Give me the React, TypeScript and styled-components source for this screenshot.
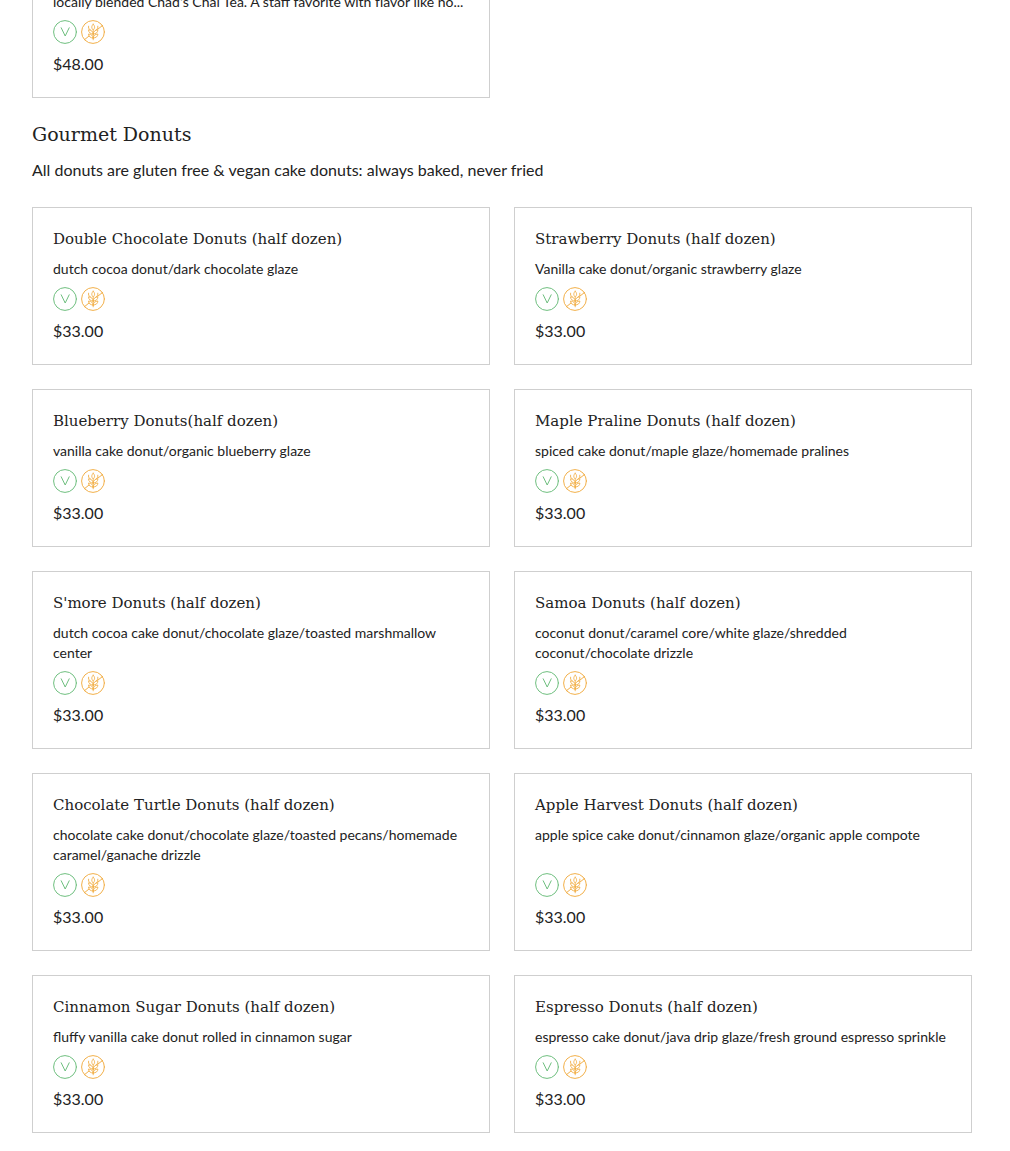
import React from 'react';
import styled, { createGlobalStyle } from 'styled-components';

const GlobalStyle = createGlobalStyle`
  *, *::before, *::after { box-sizing: border-box; }
  body {
    margin: 0;
    background: #fff;
    color: #222;
    font-family: Lato, "Open Sans", sans-serif;
    font-size: 16px;
    line-height: 24px;
  }
  h2, h3, p, ul { margin: 0; padding: 0; }
  ul { list-style: none; }
`;

const Page = styled.main`
  overflow: hidden;
  padding: 0 38px 16px 32px;
`;

const Section = styled.section`
  display: flex;
  flex-direction: column;
`;

const SectionTitle = styled.h2`
  margin-top: 20px;
  font-family: "DejaVu Serif", serif;
  font-size: 19px;
  font-weight: 400;
  line-height: 32px;
`;

const SectionText = styled.p`
  margin: 8px 0 25px;
`;

const Grid = styled.ul`
  display: grid;
  grid-template-columns: repeat(2, minmax(0, 1fr));
  gap: 24px;
`;

const Card = styled.li<{ $continued?: boolean }>`
  display: flex;
  flex-direction: column;
  gap: 8px;
  padding: ${(p) => (p.$continued ? '0 20px 21px' : '20px 20px 21px')};
  margin-top: ${(p) => (p.$continued ? '-8px' : '0')};
  border: 1px solid #cfcfcf;
  border-top-width: ${(p) => (p.$continued ? '0' : '1px')};
`;

const ItemTitle = styled.h3`
  font-family: "DejaVu Serif", serif;
  font-size: 15px;
  font-weight: 400;
  line-height: 23px;
`;

const Description = styled.p<{ $singleLine?: boolean }>`
  flex: 1;
  font-size: 14px;
  line-height: 20px;
  ${(p) => p.$singleLine && 'white-space: nowrap; overflow: hidden; text-overflow: ellipsis;'}
`;

const Badges = styled.div`
  display: flex;
  gap: 4px;
`;

const BadgeIcon = styled.svg<{ $tone: string }>`
  display: block;
  width: 24px;
  height: 24px;
  fill: none;
  stroke: ${(p) => p.$tone};
  stroke-linecap: round;
  stroke-linejoin: round;
`;

const Price = styled.p`
  line-height: 24px;
`;

const VeganBadge = () => (
  <BadgeIcon $tone="#6fbf7f" viewBox="0 0 24 24" role="img" aria-label="Vegan">
    <circle cx="12" cy="12" r="11.4" strokeWidth="1" />
    <path d="M8.2 7.800 12.200 16l4-8.200" strokeWidth="1" />
  </BadgeIcon>
);

const GlutenFreeBadge = () => (
  <BadgeIcon $tone="#f2b04a" viewBox="0 0 24 24" role="img" aria-label="Gluten free">
    <circle cx="12" cy="12" r="11.4" strokeWidth="1" />
    <path d="M3.600 19.600 8 16M16.800 9.200 21.600 5.400" strokeWidth="1" />
    <path
      d="M12.200 10v9.800M12.200 4.200c-1.900 1.900-1.900 3.900 0 5.800 1.900-1.900 1.900-3.900 0-5.800ZM12.200 14c-.1-2.600-1.900-4-4.700-4.200.1 2.700 1.900 4.200 4.700 4.200ZM12.200 14c.1-2.600 1.900-4 4.700-4.200-.1 2.700-1.900 4.200-4.700 4.200ZM12.200 18c-.1-2.400-1.900-3.800-4.700-4 .1 2.500 1.900 4 4.700 4ZM12.200 18c.1-2.400 1.900-3.800 4.700-4-.1 2.500-1.900 4-4.700 4ZM7.600 6.200v2.200l1.800 1.400M16.800 6.200v2.200L15 9.800"
      strokeWidth="0.9"
    />
  </BadgeIcon>
);

type Item = { title?: string; description: string; price: string };

const donuts: Item[] = [
  { title: 'Double Chocolate Donuts (half dozen)', description: 'dutch cocoa donut/dark chocolate glaze', price: '$33.00' },
  { title: 'Strawberry Donuts (half dozen)', description: 'Vanilla cake donut/organic strawberry glaze', price: '$33.00' },
  { title: 'Blueberry Donuts(half dozen)', description: 'vanilla cake donut/organic blueberry glaze', price: '$33.00' },
  { title: 'Maple Praline Donuts (half dozen)', description: 'spiced cake donut/maple glaze/homemade pralines', price: '$33.00' },
  { title: "S'more Donuts (half dozen)", description: 'dutch cocoa cake donut/chocolate glaze/toasted marshmallow center', price: '$33.00' },
  { title: 'Samoa Donuts (half dozen)', description: 'coconut donut/caramel core/white glaze/shredded coconut/chocolate drizzle', price: '$33.00' },
  { title: 'Chocolate Turtle Donuts (half dozen)', description: 'chocolate cake donut/chocolate glaze/toasted pecans/homemade caramel/ganache drizzle', price: '$33.00' },
  { title: 'Apple Harvest Donuts (half dozen)', description: 'apple spice cake donut/cinnamon glaze/organic apple compote', price: '$33.00' },
  { title: 'Cinnamon Sugar Donuts (half dozen)', description: 'fluffy vanilla cake donut rolled in cinnamon sugar', price: '$33.00' },
  { title: 'Espresso Donuts (half dozen)', description: 'espresso cake donut/java drip glaze/fresh ground espresso sprinkle', price: '$33.00' },
];

const MenuCard = ({ title, description, price }: Item) => (
  <Card $continued={!title}>
    {title && <ItemTitle>{title}</ItemTitle>}
    <Description $singleLine={!title}>{description}</Description>
    <Badges>
      <VeganBadge />
      <GlutenFreeBadge />
    </Badges>
    <Price>{price}</Price>
  </Card>
);

export default function App() {
  return (
    <>
      <GlobalStyle />
      <Page>
        <Grid>
          <MenuCard
            description="locally blended Chad's Chai Tea. A staff favorite with flavor like no..."
            price="$48.00"
          />
        </Grid>
        <Section>
          <SectionTitle>Gourmet Donuts</SectionTitle>
          <SectionText>All donuts are gluten free &amp; vegan cake donuts: always baked, never fried</SectionText>
          <Grid>
            {donuts.map((item) => (
              <MenuCard key={item.title} {...item} />
            ))}
          </Grid>
        </Section>
      </Page>
    </>
  );
}
